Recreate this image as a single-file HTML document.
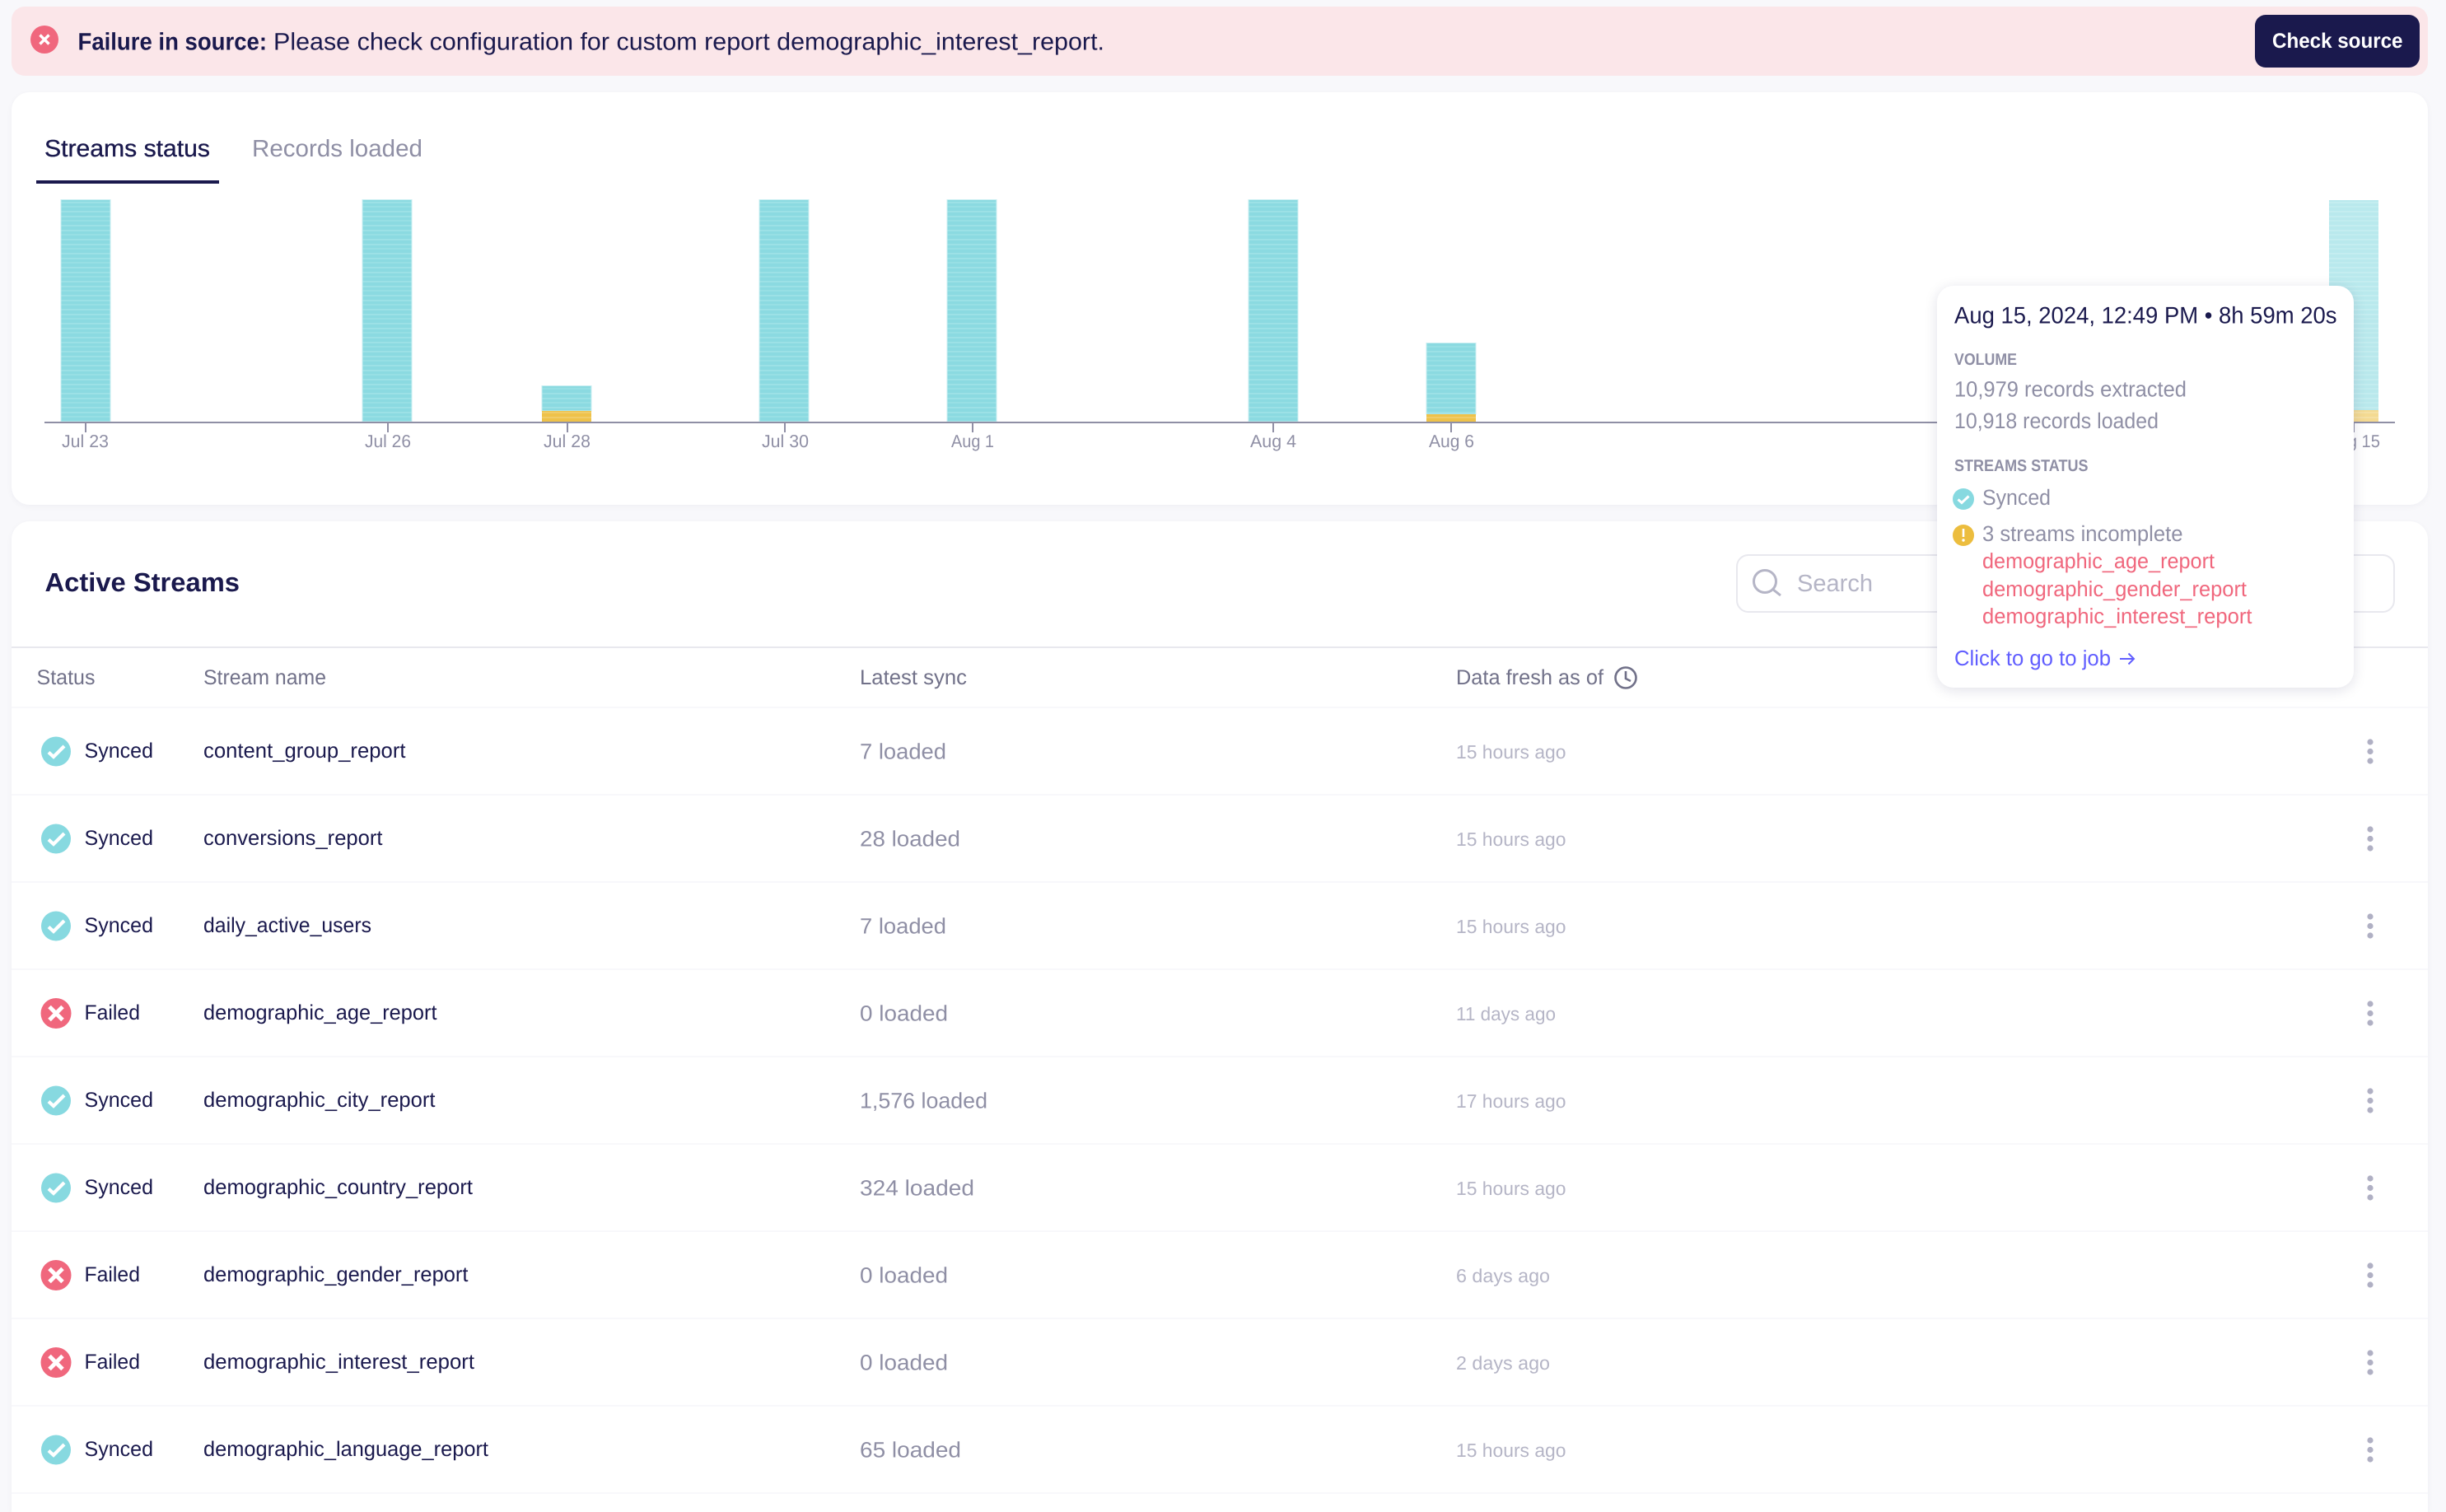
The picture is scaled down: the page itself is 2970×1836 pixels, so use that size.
<!DOCTYPE html>
<html lang="en">
<head>
<meta charset="utf-8">
<title>Streams status</title>
<style>
html,body{margin:0;padding:0;width:2970px;height:1836px;overflow:hidden;background:#f8f8fb;font-family:"Liberation Sans",Arial,sans-serif}
#page{position:relative;width:2970px;height:1836px;overflow:hidden}
.box{position:absolute;box-sizing:border-box}
#banner{left:14px;top:8px;width:2934px;height:84px;background:#fbe6e9;border-radius:16px}
#btn{left:2738px;top:18px;width:200px;height:64px;background:#1a194d;border-radius:13px}
#c1{left:14px;top:112px;width:2934px;height:501px;background:#fff;border-radius:22px;box-shadow:0 2px 8px rgba(26,25,77,.04)}
#c2{left:14px;top:633px;width:2934px;height:1203px;background:#fff;border-radius:22px 22px 0 0;box-shadow:0 2px 8px rgba(26,25,77,.04)}
#search{left:2108px;top:673px;width:800px;height:71px;border:2px solid #e8e8ee;border-radius:15px;background:#fff}
#tip{left:2352px;top:347px;width:506px;height:488px;background:#fff;border-radius:20px;box-shadow:0 3px 16px rgba(26,25,77,.13)}
svg.l{position:absolute;left:0;top:0;width:2970px;height:1836px;display:block}
text{font-family:"Liberation Sans",Arial,sans-serif;text-rendering:geometricPrecision}
.d{fill:#1a194d}
.st{font-size:25.5px;fill:#1a194d}
.nm{font-size:25.5px;fill:#1a194d}
.ln{font-size:26.5px;fill:#8f8fa5}
.fr{font-size:23px;fill:#b5b5c6}
.hd{font-size:25.5px;fill:#717189}
.ax{font-size:21.5px;fill:#8f8fa5}
.tg{font-size:26.5px;fill:#8f8fa5}
.tc{font-size:20px;font-weight:bold;fill:#8f8fa5}
.tr{font-size:26px;fill:#f0677d}
</style>
</head>
<body>
<div id="page">
<div class="box" id="banner"></div>
<div class="box" id="btn"></div>
<div class="box" id="c1"></div>
<div class="box" id="c2"></div>
<div class="box" id="search"></div>

<svg class="l" viewBox="0 0 2970 1836" xmlns="http://www.w3.org/2000/svg">
<defs>
<pattern id="pt" width="60" height="17" patternUnits="userSpaceOnUse" y="243">
<rect width="60" height="17" fill="#8bdae1"/>
<rect y="2" width="60" height="2" fill="#9ce1e6"/>
<rect y="7" width="60" height="2" fill="#97dfe4"/>
<rect y="13" width="60" height="2" fill="#9ce1e6"/>
</pattern>
<pattern id="py" width="60" height="6" patternUnits="userSpaceOnUse">
<rect width="60" height="6" fill="#eec24a"/>
<rect y="2" width="60" height="2" fill="#f0cc68"/>
</pattern>
<g id="ok"><circle r="18" fill="#87d9e0"/><path d="M-9 1L-3 6.5L10-6.5" fill="none" stroke="#fff" stroke-width="4.2"/></g>
<g id="no"><circle r="18.5" fill="#f0677d"/><path d="M-8-8L8 8M8-8L-8 8" fill="none" stroke="#fff" stroke-width="5"/></g>
<g id="kb" fill="#b0b0c4"><circle cy="-11.5" r="3.6"/><circle r="3.6"/><circle cy="11.5" r="3.6"/></g>
</defs>

<!-- banner -->
<circle cx="54" cy="48" r="17" fill="#f0677d"/>
<path d="M48.5 42.5L59.5 53.5M59.5 42.5L48.5 53.5" stroke="#fff" stroke-width="3.4" fill="none"/>
<text x="94.5" y="60.5" class="d" font-size="29.5" font-weight="bold" textLength="229.5" lengthAdjust="spacingAndGlyphs">Failure in source:</text>
<text x="332" y="60.5" class="d" font-size="29.5" textLength="1009" lengthAdjust="spacingAndGlyphs">Please check configuration for custom report demographic_interest_report.</text>
<text x="2759" y="58" fill="#fff" font-size="25.5" font-weight="bold" textLength="158.5" lengthAdjust="spacingAndGlyphs">Check source</text>

<!-- tabs -->
<text x="54" y="190" class="d" font-size="29" stroke="#1a194d" stroke-width=".35" textLength="201" lengthAdjust="spacingAndGlyphs">Streams status</text>
<text x="306" y="190" fill="#8f8fa5" font-size="29" textLength="207" lengthAdjust="spacingAndGlyphs">Records loaded</text>
<rect x="44" y="219" width="222" height="4" fill="#1a194d"/>

<!-- bars -->
<g stroke="#c8eef1" stroke-width="1">
<rect x="74" y="242.5" width="60" height="269.5" fill="url(#pt)"/>
<rect x="440" y="242.5" width="60" height="269.5" fill="url(#pt)"/>
<rect x="658" y="468.5" width="60" height="30.5" fill="url(#pt)"/>
<rect x="922" y="242.5" width="60" height="269.5" fill="url(#pt)"/>
<rect x="1150" y="242.5" width="60" height="269.5" fill="url(#pt)"/>
<rect x="1516" y="242.5" width="60" height="269.5" fill="url(#pt)"/>
<rect x="1732" y="416.5" width="60" height="86.5" fill="url(#pt)"/>
</g>
<rect x="658" y="499" width="60" height="13" fill="url(#py)"/>
<rect x="1732" y="503" width="60" height="9" fill="url(#py)"/>
<g opacity=".6">
<rect x="2828" y="243" width="60" height="255" fill="url(#pt)"/>
<rect x="2828" y="498" width="60" height="14" fill="url(#py)"/>
</g>
<!-- axis -->
<rect x="54" y="512" width="2854" height="2" fill="#8f8fa5"/>
<g fill="#8f8fa5">
<rect x="103" y="514" width="2" height="11"/>
<rect x="470" y="514" width="2" height="11"/>
<rect x="688" y="514" width="2" height="11"/>
<rect x="952" y="514" width="2" height="11"/>
<rect x="1180" y="514" width="2" height="11"/>
<rect x="1545" y="514" width="2" height="11"/>
<rect x="1761" y="514" width="2" height="11"/>
<rect x="2857" y="514" width="2" height="11"/>
</g>
<text x="75" y="543" class="ax" textLength="57" lengthAdjust="spacingAndGlyphs">Jul 23</text>
<text x="443" y="543" class="ax" textLength="56" lengthAdjust="spacingAndGlyphs">Jul 26</text>
<text x="660" y="543" class="ax" textLength="57" lengthAdjust="spacingAndGlyphs">Jul 28</text>
<text x="925" y="543" class="ax" textLength="57" lengthAdjust="spacingAndGlyphs">Jul 30</text>
<text x="1155" y="543" class="ax" textLength="52" lengthAdjust="spacingAndGlyphs">Aug 1</text>
<text x="1518" y="543" class="ax" textLength="56" lengthAdjust="spacingAndGlyphs">Aug 4</text>
<text x="1735" y="543" class="ax" textLength="55" lengthAdjust="spacingAndGlyphs">Aug 6</text>
<text x="2826" y="543" class="ax" textLength="64" lengthAdjust="spacingAndGlyphs">Aug 15</text>

<!-- active streams header -->
<text x="54.5" y="718" class="d" font-size="32" font-weight="bold" textLength="236.5" lengthAdjust="spacingAndGlyphs">Active Streams</text>
<circle cx="2143" cy="706" r="13.5" fill="none" stroke="#b5b5c6" stroke-width="3"/>
<path d="M2152.5 715.5L2162 723" stroke="#b5b5c6" stroke-width="3" fill="none"/>
<text x="2182" y="718" fill="#b5b5c6" font-size="29" textLength="92" lengthAdjust="spacingAndGlyphs">Search</text>
<rect x="14" y="785" width="2934" height="2" fill="#e8e8ee"/>

<text x="44.5" y="831" class="hd" textLength="71" lengthAdjust="spacingAndGlyphs">Status</text>
<text x="247" y="831" class="hd" textLength="149" lengthAdjust="spacingAndGlyphs">Stream name</text>
<text x="1044" y="831" class="hd" textLength="130" lengthAdjust="spacingAndGlyphs">Latest sync</text>
<text x="1768" y="831" class="hd" textLength="179" lengthAdjust="spacingAndGlyphs">Data fresh as of</text>
<circle cx="1974" cy="823" r="12.5" fill="none" stroke="#717189" stroke-width="2.6"/>
<path d="M1974 815V824L1980 827" fill="none" stroke="#717189" stroke-width="2.6"/>

<!-- row lines -->
<g fill="#f8f8fb">
<rect x="14" y="858" width="2934" height="2"/>
<rect x="14" y="964" width="2934" height="2"/>
<rect x="14" y="1070" width="2934" height="2"/>
<rect x="14" y="1176" width="2934" height="2"/>
<rect x="14" y="1282" width="2934" height="2"/>
<rect x="14" y="1388" width="2934" height="2"/>
<rect x="14" y="1494" width="2934" height="2"/>
<rect x="14" y="1600" width="2934" height="2"/>
<rect x="14" y="1706" width="2934" height="2"/>
<rect x="14" y="1812" width="2934" height="2"/>
</g>

<!-- rows -->
<use href="#ok" x="68" y="912.5"/><text x="102.5" y="920" class="st" textLength="83.5" lengthAdjust="spacingAndGlyphs">Synced</text><text x="247" y="920" class="nm" textLength="245.5" lengthAdjust="spacingAndGlyphs">content_group_report</text><text x="1044" y="921.5" class="ln" textLength="105" lengthAdjust="spacingAndGlyphs">7 loaded</text><text x="1768" y="921" class="fr" textLength="133.5" lengthAdjust="spacingAndGlyphs">15 hours ago</text><use href="#kb" x="2878" y="912.5"/>

<use href="#ok" x="68" y="1018.5"/><text x="102.5" y="1026" class="st" textLength="83.5" lengthAdjust="spacingAndGlyphs">Synced</text><text x="247" y="1026" class="nm" textLength="217.5" lengthAdjust="spacingAndGlyphs">conversions_report</text><text x="1044" y="1027.5" class="ln" textLength="122" lengthAdjust="spacingAndGlyphs">28 loaded</text><text x="1768" y="1027" class="fr" textLength="133.5" lengthAdjust="spacingAndGlyphs">15 hours ago</text><use href="#kb" x="2878" y="1018.5"/>

<use href="#ok" x="68" y="1124.5"/><text x="102.5" y="1132" class="st" textLength="83.5" lengthAdjust="spacingAndGlyphs">Synced</text><text x="247" y="1132" class="nm" textLength="204" lengthAdjust="spacingAndGlyphs">daily_active_users</text><text x="1044" y="1133.5" class="ln" textLength="105" lengthAdjust="spacingAndGlyphs">7 loaded</text><text x="1768" y="1133" class="fr" textLength="133.5" lengthAdjust="spacingAndGlyphs">15 hours ago</text><use href="#kb" x="2878" y="1124.5"/>

<use href="#no" x="68" y="1230.5"/><text x="102.5" y="1238" class="st" textLength="67.5" lengthAdjust="spacingAndGlyphs">Failed</text><text x="247" y="1238" class="nm" textLength="283.5" lengthAdjust="spacingAndGlyphs">demographic_age_report</text><text x="1044" y="1239.5" class="ln" textLength="107" lengthAdjust="spacingAndGlyphs">0 loaded</text><text x="1768" y="1239" class="fr" textLength="121" lengthAdjust="spacingAndGlyphs">11 days ago</text><use href="#kb" x="2878" y="1230.5"/>

<use href="#ok" x="68" y="1336.5"/><text x="102.5" y="1344" class="st" textLength="83.5" lengthAdjust="spacingAndGlyphs">Synced</text><text x="247" y="1344" class="nm" textLength="281.5" lengthAdjust="spacingAndGlyphs">demographic_city_report</text><text x="1044" y="1345.5" class="ln" textLength="155" lengthAdjust="spacingAndGlyphs">1,576 loaded</text><text x="1768" y="1345" class="fr" textLength="133.5" lengthAdjust="spacingAndGlyphs">17 hours ago</text><use href="#kb" x="2878" y="1336.5"/>

<use href="#ok" x="68" y="1442.5"/><text x="102.5" y="1450" class="st" textLength="83.5" lengthAdjust="spacingAndGlyphs">Synced</text><text x="247" y="1450" class="nm" textLength="327" lengthAdjust="spacingAndGlyphs">demographic_country_report</text><text x="1044" y="1451.5" class="ln" textLength="139" lengthAdjust="spacingAndGlyphs">324 loaded</text><text x="1768" y="1451" class="fr" textLength="133.5" lengthAdjust="spacingAndGlyphs">15 hours ago</text><use href="#kb" x="2878" y="1442.5"/>

<use href="#no" x="68" y="1548.5"/><text x="102.5" y="1556" class="st" textLength="67.5" lengthAdjust="spacingAndGlyphs">Failed</text><text x="247" y="1556" class="nm" textLength="321.5" lengthAdjust="spacingAndGlyphs">demographic_gender_report</text><text x="1044" y="1557.5" class="ln" textLength="107" lengthAdjust="spacingAndGlyphs">0 loaded</text><text x="1768" y="1557" class="fr" textLength="114" lengthAdjust="spacingAndGlyphs">6 days ago</text><use href="#kb" x="2878" y="1548.5"/>

<use href="#no" x="68" y="1654.5"/><text x="102.5" y="1662" class="st" textLength="67.5" lengthAdjust="spacingAndGlyphs">Failed</text><text x="247" y="1662" class="nm" textLength="329" lengthAdjust="spacingAndGlyphs">demographic_interest_report</text><text x="1044" y="1663.5" class="ln" textLength="107" lengthAdjust="spacingAndGlyphs">0 loaded</text><text x="1768" y="1663" class="fr" textLength="114" lengthAdjust="spacingAndGlyphs">2 days ago</text><use href="#kb" x="2878" y="1654.5"/>

<use href="#ok" x="68" y="1760.5"/><text x="102.5" y="1768" class="st" textLength="83.5" lengthAdjust="spacingAndGlyphs">Synced</text><text x="247" y="1768" class="nm" textLength="346" lengthAdjust="spacingAndGlyphs">demographic_language_report</text><text x="1044" y="1769.5" class="ln" textLength="123" lengthAdjust="spacingAndGlyphs">65 loaded</text><text x="1768" y="1769" class="fr" textLength="133.5" lengthAdjust="spacingAndGlyphs">15 hours ago</text><use href="#kb" x="2878" y="1760.5"/>
</svg>

<div class="box" id="tip"></div>
<svg class="l" viewBox="0 0 2970 1836" xmlns="http://www.w3.org/2000/svg">
<text x="2373" y="392.5" class="d" font-size="28.5" textLength="464.5" lengthAdjust="spacingAndGlyphs">Aug 15, 2024, 12:49 PM • 8h 59m 20s</text>
<text x="2373" y="443" class="tc" textLength="76" lengthAdjust="spacingAndGlyphs">VOLUME</text>
<text x="2373" y="481.5" class="tg" textLength="282" lengthAdjust="spacingAndGlyphs">10,979 records extracted</text>
<text x="2373" y="520" class="tg" textLength="248" lengthAdjust="spacingAndGlyphs">10,918 records loaded</text>
<text x="2373" y="572" class="tc" textLength="162.5" lengthAdjust="spacingAndGlyphs">STREAMS STATUS</text>
<circle cx="2384" cy="606" r="13" fill="#87d9e0"/>
<path d="M2377.5 606.5L2382 610.5L2390.5 602.5" fill="none" stroke="#fff" stroke-width="3"/>
<text x="2407" y="613" class="tg" textLength="83" lengthAdjust="spacingAndGlyphs">Synced</text>
<circle cx="2384" cy="650" r="13" fill="#ecbd3e"/>
<rect x="2382.7" y="642" width="2.6" height="10" fill="#fff"/>
<circle cx="2384" cy="656" r="1.7" fill="#fff"/>
<text x="2407" y="657" class="tg" textLength="243.5" lengthAdjust="spacingAndGlyphs">3 streams incomplete</text>
<text x="2407" y="690" class="tr" textLength="282" lengthAdjust="spacingAndGlyphs">demographic_age_report</text>
<text x="2407" y="724" class="tr" textLength="321" lengthAdjust="spacingAndGlyphs">demographic_gender_report</text>
<text x="2407" y="757" class="tr" textLength="327.5" lengthAdjust="spacingAndGlyphs">demographic_interest_report</text>
<text x="2373" y="808" fill="#615eff" font-size="26" textLength="190" lengthAdjust="spacingAndGlyphs">Click to go to job</text>
<path d="M2574 800H2591M2584.5 793.5L2591 800L2584.5 806.5" fill="none" stroke="#615eff" stroke-width="2"/>
</svg>
</div>
</body>
</html>
